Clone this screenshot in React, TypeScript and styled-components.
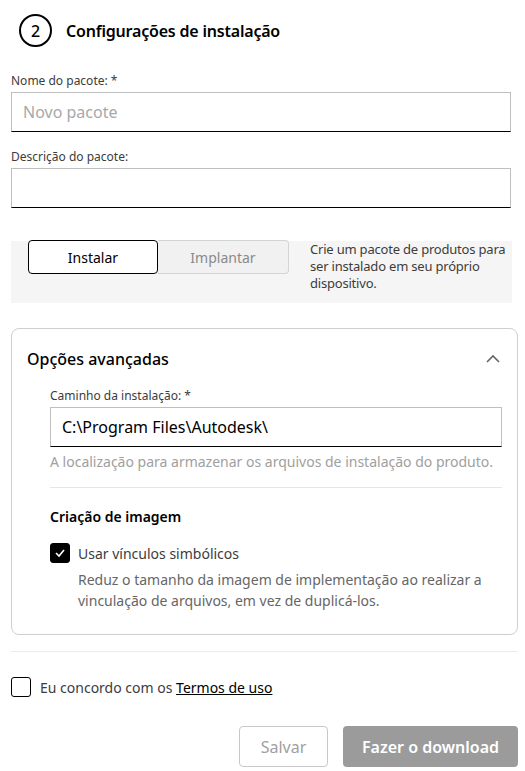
import React from 'react';
import styled, { createGlobalStyle } from 'styled-components';

const GlobalStyle = createGlobalStyle`
  body {
    margin: 0;
    background: #fff;
    font-family: 'Noto Sans', 'Open Sans', sans-serif;
    color: #3c3c3c;
  }
`;

const App = () => {
  return (
    <>
      <GlobalStyle />
      <Page>
        <Header>
          <StepCircle>2</StepCircle>
          <Title>Configurações de instalação</Title>
        </Header>

        <Field>
          <Label>Nome do pacote: *</Label>
          <TextInput placeholder="Novo pacote" />
        </Field>
        <Field>
          <Label>Descrição do pacote:</Label>
          <TextInput />
        </Field>

        <ModePanel>
          <Toggle>
            <ToggleButton active>Instalar</ToggleButton>
            <ToggleButton>Implantar</ToggleButton>
          </Toggle>
          <ModeText>Crie um pacote de produtos para ser instalado em seu próprio dispositivo.</ModeText>
        </ModePanel>

        <Card>
          <CardHeader>
            <CardTitle>Opções avançadas</CardTitle>
            <svg width="16" height="10" viewBox="0 0 16 10">
              <path d="M2 8 L8 2 L14 8" fill="none" stroke="#666" strokeWidth="1.6" />
            </svg>
          </CardHeader>
          <CardBody>
            <Label>Caminho da instalação: *</Label>
            <TextInput defaultValue="C:\Program Files\Autodesk\" />
            <Helper>A localização para armazenar os arquivos de instalação do produto.</Helper>
            <Divider />
            <SubTitle>Criação de imagem</SubTitle>
            <CheckRow>
              <CheckBox checked>
                <svg width="12" height="10" viewBox="0 0 12 10">
                  <path d="M2 5 L5 8 L10 2" fill="none" stroke="#fff" strokeWidth="1.6" />
                </svg>
              </CheckBox>
              <CheckLabel>Usar vínculos simbólicos</CheckLabel>
            </CheckRow>
            <CheckDesc>
              Reduz o tamanho da imagem de implementação ao realizar a vinculação de arquivos, em vez de duplicá-los.
            </CheckDesc>
          </CardBody>
        </Card>

        <FooterRule />
        <AgreeRow>
          <CheckBox />
          <AgreeText>
            Eu concordo com os <TermsLink href="#">Termos de uso</TermsLink>
          </AgreeText>
        </AgreeRow>

        <Actions>
          <SaveButton>Salvar</SaveButton>
          <DownloadButton>Fazer o download</DownloadButton>
        </Actions>
      </Page>
    </>
  );
};

export default App;

const Page = styled.div`
  width: 507px;
  padding: 14px 0 5px 11px;
`;

const Header = styled.div`
  display: flex;
  align-items: center;
  gap: 14px;
  padding-left: 8px;
  margin-bottom: 26px;
`;

const StepCircle = styled.div`
  width: 29px;
  height: 29px;
  border: 2px solid #000;
  border-radius: 50%;
  display: flex;
  align-items: center;
  justify-content: center;
  font-size: 16px;
  font-weight: 500;
  color: #000;
`;

const Title = styled.h1`
  margin: 0;
  font-size: 16px;
  font-weight: 600;
  color: #000;
  letter-spacing: -0.2px;
`;

const Field = styled.div`
  width: 500px;
  margin-bottom: 17px;
`;

const Label = styled.div`
  font-size: 12px;
  line-height: 16px;
  color: #3c3c3c;
  margin-bottom: 3px;
`;

const TextInput = styled.input`
  box-sizing: border-box;
  width: 100%;
  height: 40px;
  border: 1px solid #bfbfbf;
  border-bottom: 1px solid #000;
  padding: 0 11px;
  font-family: inherit;
  font-size: 16px;
  color: #000;
  outline: none;
  &::placeholder {
    color: #a8a8a8;
  }
`;

const ModePanel = styled.div`
  width: 501px;
  margin-top: 33px;
  box-sizing: border-box;
  background: #f5f5f5;
  display: flex;
  align-items: flex-start;
  padding: 0 0 11px 17px;
  gap: 21px;
`;

const Toggle = styled.div`
  display: flex;
  margin-top: -1px;
`;

const ToggleButton = styled.button<{ active?: boolean }>`
  width: ${p => (p.active ? '130px' : '131px')};
  height: 34px;
  font-family: inherit;
  font-size: 14px;
  border-radius: ${p => (p.active ? '4px' : '0 4px 4px 0')};
  border: 1px solid ${p => (p.active ? '#000' : '#d4d4d4')};
  ${p => (p.active ? '' : 'border-left: none;')}
  background: ${p => (p.active ? '#fff' : '#f1f1f1')};
  color: ${p => (p.active ? '#000' : '#8a8a8a')};
  cursor: pointer;
`;

const ModeText = styled.p`
  margin: 0;
  width: 205px;
  font-size: 13px;
  line-height: 17px;
  color: #3c3c3c;
  letter-spacing: -0.2px;
`;

const Card = styled.div`
  width: 507px;
  box-sizing: border-box;
  margin-top: 25px;
  border: 1px solid #cfcfcf;
  border-radius: 8px;
  padding: 19px 16px 23px 15px;
`;

const CardHeader = styled.div`
  display: flex;
  align-items: center;
  justify-content: space-between;
  margin-bottom: 18px;
`;

const CardTitle = styled.h2`
  margin: 0;
  font-size: 16px;
  font-weight: 500;
  color: #000;
`;

const CardBody = styled.div`
  padding: 0 0 0 23px;
  width: 452px;
`;

const Helper = styled.div`
  margin-top: 5px;
  font-size: 14px;
  line-height: 20px;
  color: #a0a0a0;
  white-space: nowrap;
`;

const Divider = styled.hr`
  border: none;
  border-top: 1px solid #e6e6e6;
  margin: 15px 0 19px;
`;

const SubTitle = styled.h3`
  margin: 0 0 17px;
  font-size: 14px;
  font-weight: 600;
  color: #000;
`;

const CheckRow = styled.div`
  display: flex;
  align-items: center;
  gap: 8px;
`;

const CheckBox = styled.span<{ checked?: boolean }>`
  flex: none;
  box-sizing: border-box;
  width: 20px;
  height: 20px;
  border-radius: 3px;
  border: 1px solid #000;
  background: ${p => (p.checked ? '#000' : '#fff')};
  display: flex;
  align-items: center;
  justify-content: center;
`;

const CheckLabel = styled.span`
  font-size: 14px;
  color: #3c3c3c;
`;

const CheckDesc = styled.p`
  margin: 6px 0 0 28px;
  font-size: 14px;
  line-height: 21px;
  color: #666;
`;

const FooterRule = styled.hr`
  width: 507px;
  border: none;
  border-top: 1px solid #ececec;
  margin: 16px 0 25px;
`;

const AgreeRow = styled.div`
  display: flex;
  align-items: center;
  gap: 9px;
`;

const AgreeText = styled.span`
  font-size: 14px;
  color: #3c3c3c;
`;

const TermsLink = styled.a`
  color: #000;
  text-decoration: underline;
`;

const Actions = styled.div`
  width: 507px;
  display: flex;
  justify-content: flex-end;
  gap: 15px;
  margin-top: 29px;
`;

const SaveButton = styled.button`
  width: 89px;
  height: 41px;
  border: 1px solid #c8c8c8;
  border-radius: 4px;
  background: #fff;
  color: #a0a0a0;
  font-family: inherit;
  font-size: 16px;
`;

const DownloadButton = styled.button`
  width: 175px;
  height: 41px;
  border: none;
  border-radius: 4px;
  background: #9b9b9b;
  color: #fff;
  font-family: inherit;
  font-size: 16px;
  font-weight: 600;
`;
